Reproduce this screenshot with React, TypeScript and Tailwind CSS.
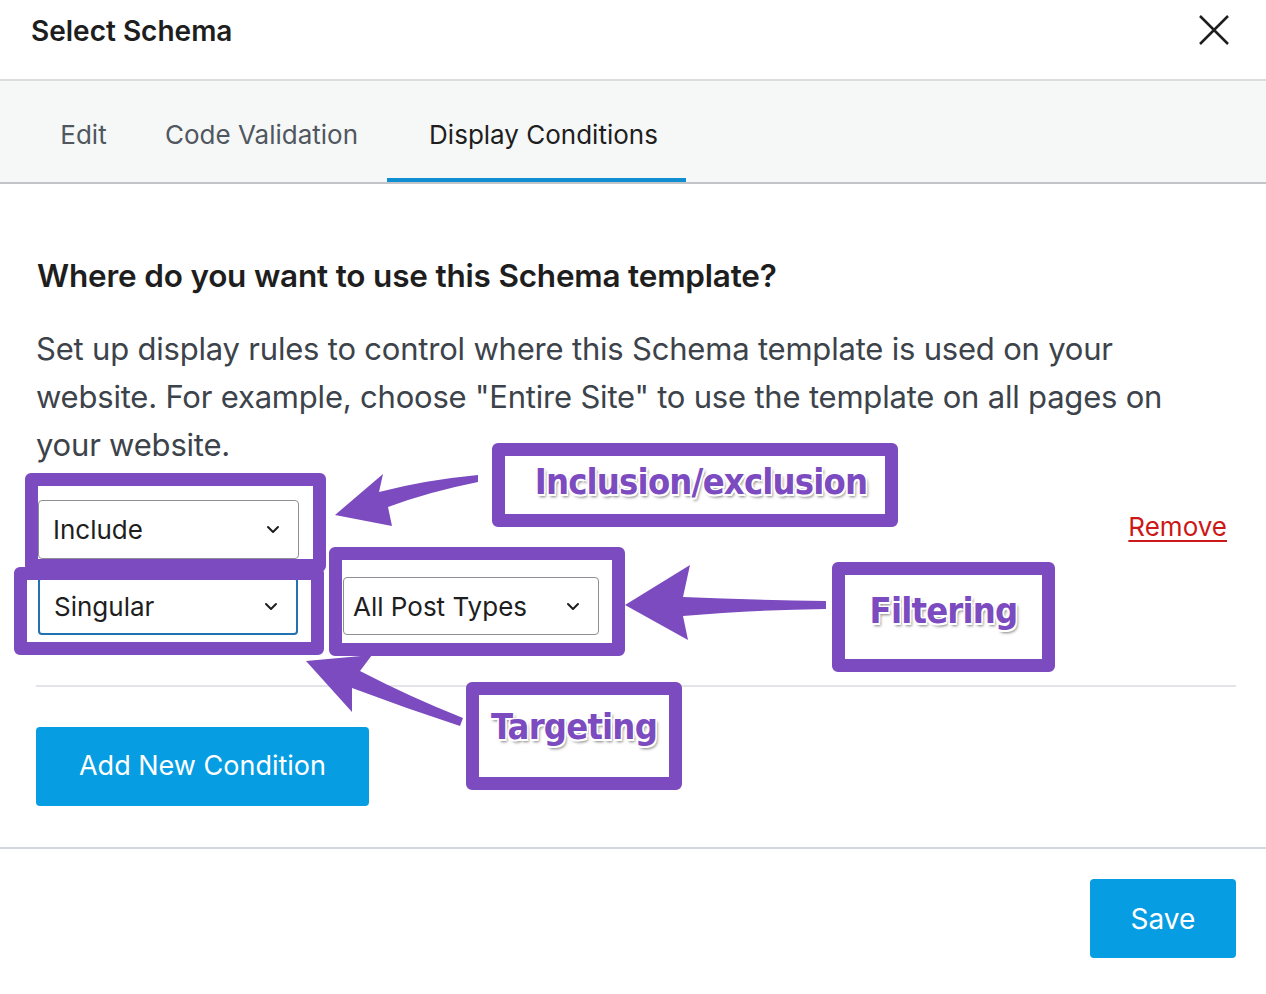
import React from 'react';

const PURPLE = '#7b4bbf';

const Chevron: React.FC = () => (
    <svg width="14" height="9" viewBox="0 0 14 9" fill="none">
        <path d="M2 2l5 5 5-5" stroke="#1e1e1e" strokeWidth="2" strokeLinecap="round" strokeLinejoin="round" />
    </svg>
);

const SelectBox: React.FC<{ label: string; className: string }> = ({ label, className }) => (
    <div className={`flex items-center justify-between bg-white rounded-[4px] pr-[18px] text-[26px] text-[#1e1e1e] ${className}`}>
        <span>{label}</span>
        <Chevron />
    </div>
);

const Note: React.FC<{ text: string; className: string; textClass: string }> = ({ text, className, textClass }) => (
    <div className={`absolute flex items-center justify-center bg-white border-[13px] border-[#7b4bbf] rounded-[6px] ${className}`}>
        <span
            className={`font-bold text-[#7b4bbf] tracking-[-0.8px] [font-family:'DejaVu_Sans_Condensed','Liberation_Sans',sans-serif] [text-shadow:-1.5px_-1.5px_0_#fff,1.5px_-1.5px_0_#fff,-1.5px_1.5px_0_#fff,1.5px_1.5px_0_#fff,2px_3px_3px_rgba(0,0,0,0.5)] ${textClass}`}
        >
            {text}
        </span>
    </div>
);

const Arrows: React.FC = () => (
    <svg className="absolute inset-0 pointer-events-none" width="1266" height="994" viewBox="0 0 1266 994">
        {/* inclusion arrow */}
        <path
            d="M335 515 L383 474 L379 492 Q425 480 478 475 L478 482 Q428 492 388 507 L392 526 Z"
            fill={PURPLE}
        />
        {/* filtering arrow */}
        <path
            d="M625 605 L690 565 L683 597 Q750 600 826 601 L826 609 Q750 610 683 616 L688 640 Z"
            fill={PURPLE}
        />
        {/* targeting arrow */}
        <path
            d="M306 661 L372 655 L360 671 Q410 697 463 718 L460 726 Q405 708 352 688 L352 712 Z"
            fill={PURPLE}
        />
    </svg>
);

export default function App() {
    return (
        <div className="relative w-[1266px] h-[994px] bg-white overflow-hidden [font-family:'Inter','Liberation_Sans',sans-serif]">
            {/* header */}
            <div className="h-[81px] flex items-start justify-between pl-[31px] pr-[36px] pt-[13px] border-b-[2px] border-[#dcdcde]">
                <h1 className="text-[28px] leading-[36px] font-semibold text-[#1e1e1e]">Select Schema</h1>
                <svg width="32" height="32" viewBox="0 0 32 32" className="mt-[1px]">
                    <path d="M2 2L30 30M30 2L2 30" stroke="#1e1e1e" strokeWidth="2.5" />
                </svg>
            </div>

            {/* tabs */}
            <div className="h-[103px] bg-[#f6f7f7] border-b-[2px] border-[#c3c4c7] flex pl-[31px]">
                <div className="w-[105px] flex items-center justify-center pt-[6px] text-[26px] text-[#50575e]">Edit</div>
                <div className="w-[251px] flex items-center justify-center pt-[6px] text-[26px] text-[#50575e]">Code Validation</div>
                <div className="w-[299px] flex items-center justify-center text-[26px] text-[#1e1e1e] border-b-[4px] border-[#0f8fd1] pt-[10px] pl-[14px]">
                    Display Conditions
                </div>
            </div>

            {/* body */}
            <div className="pl-[36px] pr-[30px] pt-[72px]">
                <h2 className="text-[31.5px] leading-[40px] font-semibold text-[#1e1e1e] tracking-[-0.2px] pl-[1px]">
                    Where do you want to use this Schema template?
                </h2>
                <p className="mt-[29px] text-[31px] leading-[48px] text-[#3c434a] tracking-[-0.2px]">
                    Set up display rules to control where this Schema template is used on your<br />
                    website. For example, choose "Entire Site" to use the template on all pages on<br />
                    your website.
                </p>

                <div className="mt-[31px] flex items-center justify-between pr-[10px]">
                    <SelectBox label="Include" className="ml-[2px] w-[261px] h-[59px] pl-[14px] border border-[#8c8f94]" />
                    <a className="mb-[6px] mr-[-1px] text-[26px] text-[#cc1818] underline underline-offset-[4px] decoration-[2px]">Remove</a>
                </div>
                <div className="mt-[18px] flex items-center gap-[45px]">
                    <SelectBox label="Singular" className="ml-[2px] w-[260px] h-[58px] pl-[14px] border-[2px] border-[#2271b1]" />
                    <SelectBox label="All Post Types" className="w-[256px] h-[58px] pl-[9px] border border-[#8c8f94]" />
                </div>

                <div className="mt-[50px] h-[2px] bg-[#e2e4e7]" />

                <button className="mt-[40px] w-[333px] h-[79px] rounded-[4px] bg-[#069de3] text-white text-[27px]">
                    Add New Condition
                </button>
            </div>

            {/* footer */}
            <div className="mt-[41px] border-t-[2px] border-[#d3d8de] flex justify-end pr-[30px] pt-[30px]">
                <button className="w-[146px] h-[79px] rounded-[4px] bg-[#069de3] text-white text-[28px]">Save</button>
            </div>

            {/* annotation overlay */}
            <div className="absolute left-[25px] top-[473px] w-[301px] h-[99px] border-[13px] border-[#7b4bbf] rounded-[6px]" />
            <div className="absolute left-[14px] top-[567px] w-[310px] h-[88px] border-[13px] border-[#7b4bbf] rounded-[6px]" />
            <div className="absolute left-[329px] top-[547px] w-[296px] h-[109px] border-[13px] border-[#7b4bbf] rounded-[6px]" />
            <Note text="Inclusion/exclusion" className="left-[492px] top-[443px] w-[406px] h-[84px]" textClass="text-[36px] pb-[6px] pl-[12px]" />
            <Note text="Filtering" className="left-[832px] top-[562px] w-[223px] h-[110px]" textClass="text-[36px] pb-[12px]" />
            <Note text="Targeting" className="left-[466px] top-[682px] w-[216px] h-[108px]" textClass="text-[36px] pb-[18px]" />
            <Arrows />
        </div>
    );
}
